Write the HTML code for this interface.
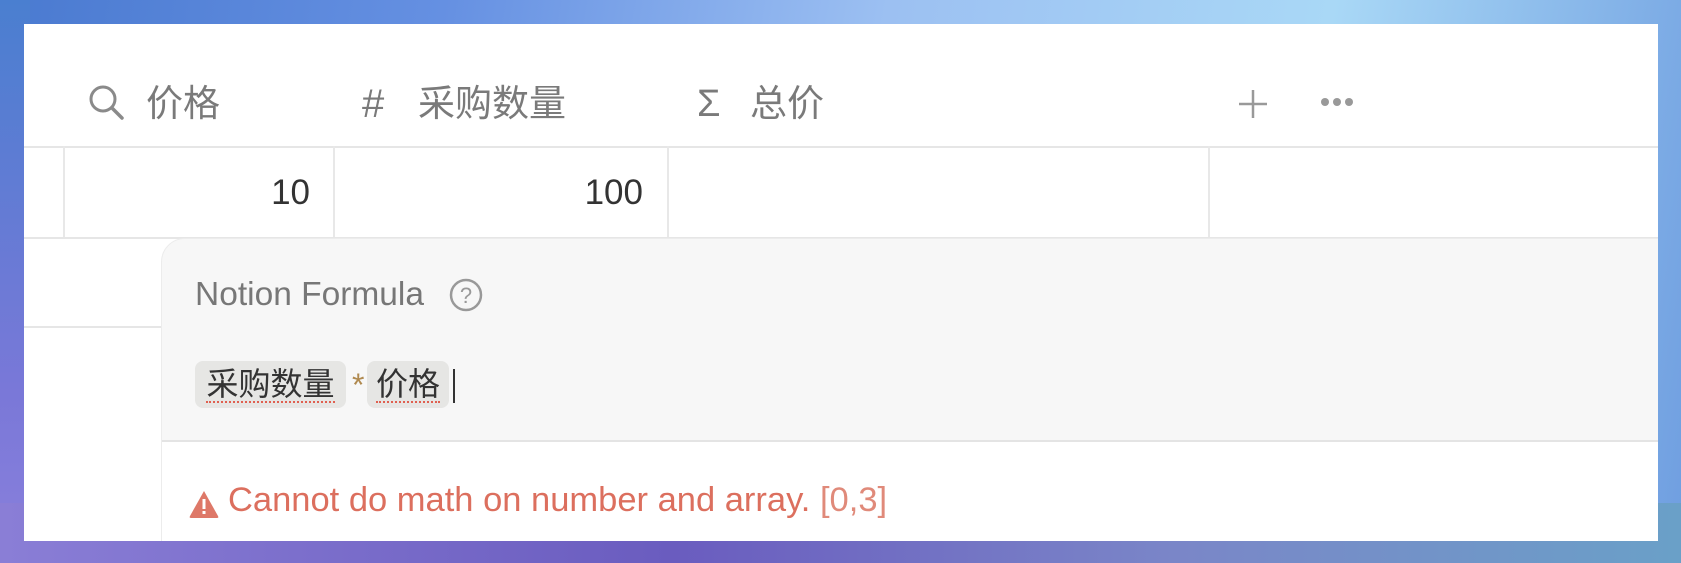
<!DOCTYPE html>
<html><head><meta charset="utf-8"><style>
*{margin:0;padding:0;box-sizing:border-box}
body{width:1681px;height:563px;overflow:hidden;position:relative;font-family:"Liberation Sans","Noto Sans CJK SC",sans-serif;
background:linear-gradient(100deg,#4a7ad0 0%,#6590e2 25%,#9cc0f2 50%,#a9d8f6 75%,#6f9ee0 100%);}
.bot{position:absolute;left:0;right:0;bottom:0;height:60px;background:linear-gradient(90deg,#8a7ed6,#6a5cbf 40%,#7a86c8 70%,#6aa0c8)}
.lft{position:absolute;left:0;top:0;bottom:0;width:30px;background:linear-gradient(180deg,#4a7fd0,#7a78d8 70%,#8a80dc)}
.panel{position:absolute;left:24px;top:24px;width:1634px;height:517px;background:#fff;overflow:hidden}
.t{position:absolute;color:#7a7a7a;font-size:37px;white-space:nowrap;line-height:44px}
.hl{position:absolute;background:#e6e6e6;height:2px}
.vl{position:absolute;background:#e8e8e8;width:2px}
.num{position:absolute;font-size:35px;color:#333}
.pop{position:absolute;left:137px;top:214px;width:1520px;height:320px;background:#f7f7f7;border-top-left-radius:24px;border:1px solid #ececec}
.chip{position:absolute;background:#e6e6e4;border-radius:8px;font-size:32px;color:#333;height:47px;line-height:47px;text-align:center}
.chip span{border-bottom:2px dotted #e06050;line-height:34px;display:inline-block}
</style></head><body>
<div class="lft"></div><div class="bot"></div>
<div class="panel">
  <svg style="position:absolute;left:64px;top:60px" width="38" height="38" viewBox="0 0 38 38"><circle cx="15" cy="15" r="12" fill="none" stroke="#8a8a8a" stroke-width="3"/><line x1="24" y1="24" x2="34" y2="34" stroke="#8a8a8a" stroke-width="3.5" stroke-linecap="round"/></svg>
  <div class="t" style="left:122px;top:58px">价格</div>
  <div class="t" style="left:338px;top:58px;font-size:40px">#</div>
  <div class="t" style="left:394px;top:58px">采购数量</div>
  <div class="t" style="left:673px;top:58px;font-size:38px">Σ</div>
  <div class="t" style="left:726px;top:58px">总价</div>
  <svg style="position:absolute;left:1214px;top:65px" width="30" height="30" viewBox="0 0 30 30"><path d="M15 1V29M1 15H29" stroke="#999" stroke-width="2.5"/></svg>
  <svg style="position:absolute;left:1296px;top:72px" width="36" height="12" viewBox="0 0 36 12"><circle cx="5" cy="6" r="4" fill="#999"/><circle cx="17" cy="6" r="4" fill="#999"/><circle cx="29" cy="6" r="4" fill="#999"/></svg>
  <div class="hl" style="left:0;top:122px;width:1634px"></div>
  <div class="vl" style="left:39px;top:122px;height:92px"></div>
  <div class="vl" style="left:309px;top:122px;height:92px"></div>
  <div class="vl" style="left:643px;top:122px;height:92px"></div>
  <div class="vl" style="left:1184px;top:122px;height:92px"></div>
  <div class="hl" style="left:0;top:213px;width:1634px"></div>
  <div class="hl" style="left:0;top:302px;width:140px"></div>
  <div class="num" style="right:1348px;top:149px">10</div>
  <div class="num" style="right:1015px;top:149px">100</div>
  <div class="pop">
    <div style="position:absolute;left:33px;top:37px;font-size:33.5px;color:#777">Notion Formula</div>
    <svg style="position:absolute;left:286px;top:38px" width="36" height="36" viewBox="0 0 36 36"><circle cx="18" cy="18" r="15" fill="none" stroke="#999" stroke-width="2.5"/><text x="18" y="26" font-size="22" text-anchor="middle" fill="#999" font-family="Liberation Sans">?</text></svg>
    <div class="chip" style="left:33px;top:122px;width:151px"><span>采购数量</span></div>
    <div style="position:absolute;left:190px;top:128px;font-size:32px;color:#b08a50">*</div>
    <div class="chip" style="left:205px;top:122px;width:82px"><span>价格</span></div>
    <div style="position:absolute;left:291px;top:130px;width:2px;height:34px;background:#333"></div>
    <div style="position:absolute;left:0;top:201px;width:1520px;height:2px;background:#e4e4e4"></div>
    <div style="position:absolute;left:0;top:203px;width:1520px;height:120px;background:#fff"></div>
    <svg style="position:absolute;left:26px;top:250px" width="32" height="30" viewBox="0 0 32 30"><path d="M16 2 L30 27 Q31 29 29 29 L3 29 Q1 29 2 27 Z" fill="#de7868"/><rect x="14.5" y="10" width="3" height="10" fill="#fff"/><rect x="14.5" y="22" width="3" height="3" fill="#fff"/></svg>
    <div style="position:absolute;left:66px;top:242px;font-size:34.5px;color:#dc6f5e;white-space:nowrap">Cannot do math on number and array. <span style="color:#e08a7a">[0,3]</span></div>
  </div>
</div>
</body></html>
